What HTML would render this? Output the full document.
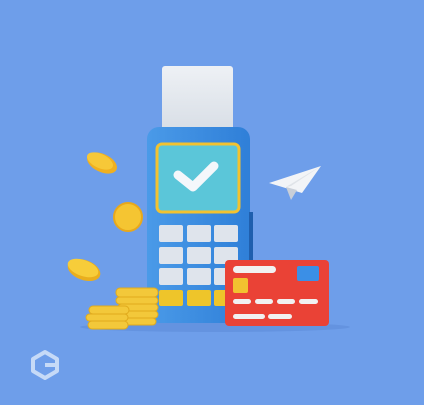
<!DOCTYPE html><html><head><style>body{margin:0;width:424px;height:400px;overflow:hidden;background:#6e9eea}</style></head><body>
<svg width="424" height="400" viewBox="0 0 424 400" xmlns="http://www.w3.org/2000/svg">
<defs>
<linearGradient id="b" x1="0" x2="1"><stop offset="0" stop-color="#4a9ae8"/><stop offset="1" stop-color="#2f7fd8"/></linearGradient>
<linearGradient id="p" x1="0" x2="0" y1="0" y2="1"><stop offset="0" stop-color="#eef1f5"/><stop offset="1" stop-color="#d7dde5"/></linearGradient>
</defs>
<ellipse cx="215" cy="327" rx="135" ry="5" fill="#5f8fdc" opacity=".7"/>
<rect x="162" y="66" width="71" height="68" rx="3" fill="url(#p)"/>
<rect x="147" y="127" width="103" height="196" rx="12" fill="url(#b)"/>
<rect x="249" y="212" width="4" height="50" fill="#1f5fae"/>
<rect x="157" y="144" width="82" height="68" rx="5" fill="#5bc6d9" stroke="#f2c230" stroke-width="3"/>
<path d="M178 175 L193 187 L214 166" fill="none" stroke="#f4f7fb" stroke-width="9" stroke-linecap="round" stroke-linejoin="round"/>
<g fill="#dfe4ec">
<rect x="159" y="225" width="24" height="17" rx="2"/><rect x="187" y="225" width="24" height="17" rx="2"/><rect x="214" y="225" width="24" height="17" rx="2"/>
<rect x="159" y="247" width="24" height="17" rx="2"/><rect x="187" y="247" width="24" height="17" rx="2"/><rect x="214" y="247" width="24" height="17" rx="2"/>
<rect x="159" y="268" width="24" height="17" rx="2"/><rect x="187" y="268" width="24" height="17" rx="2"/><rect x="214" y="268" width="24" height="17" rx="2"/>
</g>
<g fill="#eec52a"><rect x="159" y="290" width="24" height="16" rx="2"/><rect x="187" y="290" width="24" height="16" rx="2"/><rect x="214" y="290" width="24" height="16" rx="2"/></g>
<rect x="225" y="260" width="104" height="66" rx="4" fill="#ea4236"/>
<rect x="233" y="266" width="43" height="7" rx="3.5" fill="#f1f1f1"/>
<rect x="297" y="266" width="22" height="15" rx="2" fill="#3b8fe6"/>
<rect x="233" y="278" width="15" height="15" rx="2" fill="#f2c230"/>
<g fill="#f1f1f1"><rect x="233" y="299" width="18" height="5" rx="2.5"/><rect x="255" y="299" width="18" height="5" rx="2.5"/><rect x="277" y="299" width="18" height="5" rx="2.5"/><rect x="299" y="299" width="19" height="5" rx="2.5"/><rect x="233" y="314" width="32" height="5" rx="2.5"/><rect x="268" y="314" width="24" height="5" rx="2.5"/></g>
<g fill="#f3c83a" stroke="#e0aa1c" stroke-width="1">
<rect x="116" y="297" width="42" height="7" rx="3.5"/><rect x="118" y="304" width="40" height="7" rx="3.5"/><rect x="116" y="311" width="42" height="7" rx="3.5"/><rect x="116" y="318" width="40" height="7" rx="3.5"/>
<rect x="116" y="288" width="42" height="9" rx="4"/>
<rect x="89" y="306" width="40" height="8" rx="4"/><rect x="86" y="314" width="42" height="7" rx="3.5"/><rect x="88" y="321" width="40" height="8" rx="4"/>
</g>
<ellipse cx="102" cy="163" rx="16" ry="9" transform="rotate(25 102 163)" fill="#f0b020"/>
<ellipse cx="100" cy="161" rx="14" ry="7" transform="rotate(25 100 161)" fill="#f7c838"/>
<circle cx="128" cy="217" r="14" fill="#f5c532" stroke="#e8a81c" stroke-width="2"/>
<ellipse cx="84" cy="270" rx="17" ry="10" transform="rotate(20 84 270)" fill="#e9ae1e"/>
<ellipse cx="83" cy="268" rx="16" ry="8" transform="rotate(20 83 268)" fill="#f7cd3a"/>
<path d="M269 183 L321 166 L302 193 Z" fill="#f2f4f7"/>
<path d="M286 187 L291 200 L297 190 Z" fill="#c9cfd8"/>
<path d="M321 166 L291 186 L286 187 Z" fill="#dfe3e8"/>
<path d="M45 352 L57 359 L57 371 L45 378 L33 371 L33 359 Z" fill="none" stroke="#c6daf7" stroke-width="4" stroke-linejoin="round"/>
<path d="M45 365 H57" stroke="#c6daf7" stroke-width="4"/>
</svg>
</body></html>
